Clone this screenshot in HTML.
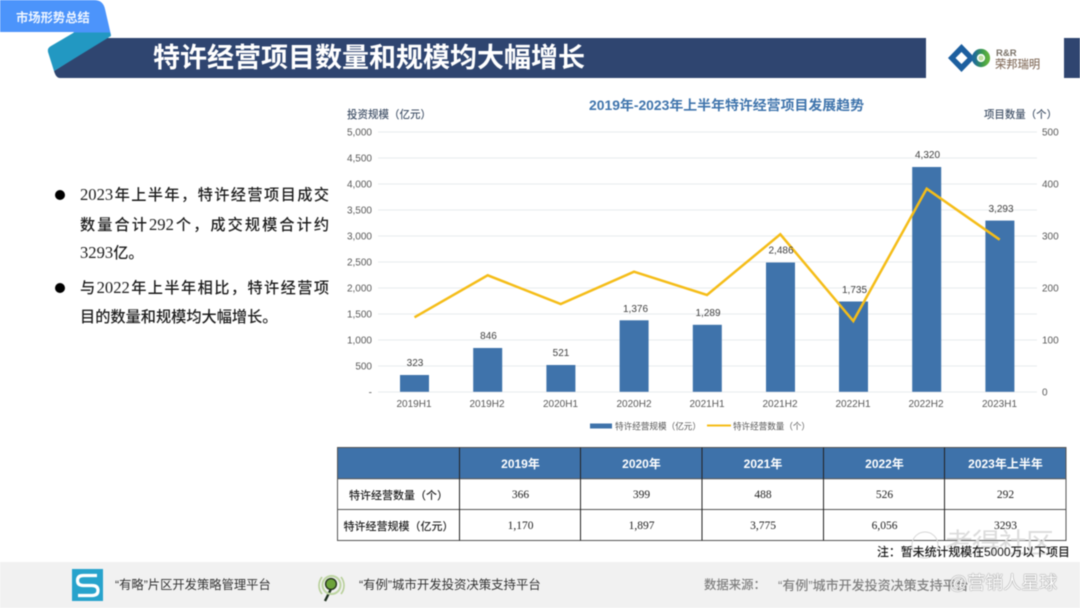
<!DOCTYPE html>
<html lang="zh"><head><meta charset="utf-8"><style>
html,body{margin:0;padding:0;background:#fff}
#p{position:relative;width:1080px;height:608px;overflow:hidden;background:#fff;font-family:"Liberation Sans","Noto Sans CJK SC",sans-serif;filter:blur(.45px)}
.a{position:absolute;white-space:nowrap;line-height:1}
.l{position:absolute;left:80px;width:249px;height:20px;line-height:20px;font-family:"Liberation Sans","Noto Sans CJK SC",sans-serif;font-size:15.2px;font-weight:500;color:#1c1c1c;text-align:justify;text-align-last:justify;white-space:normal}
.l i{font-style:normal;font-family:"Liberation Serif",serif;font-size:16.6px;font-weight:400}
.e{text-align-last:left}
.b{position:absolute;left:55px;width:10px;height:10px;border-radius:50%;background:#000}
svg{position:absolute;left:0;top:0}
svg text{font-family:"Liberation Sans","Noto Sans CJK SC",sans-serif}
.c{position:absolute;display:flex;align-items:center;justify-content:center;font-family:"Liberation Serif","Noto Sans CJK SC",serif;font-size:11.5px;color:#222;white-space:nowrap}
.h{color:#fff;font-weight:700;font-family:"Liberation Sans","Noto Sans CJK SC",sans-serif;font-size:12px}
.n{font-family:"Liberation Sans","Noto Sans CJK SC",sans-serif;font-size:11px;font-weight:500;color:#222}
</style></head><body><div id="p">

<div class="a" style="left:0;top:562px;width:1080px;height:46px;background:#f1f1f1"></div>

<svg width="1080" height="608" viewBox="0 0 1080 608">
  <defs><linearGradient id="g" x1="0" x2="1" y1="0" y2="0"><stop offset="0" stop-color="#1d6a9a"/><stop offset=".6" stop-color="#3c9a4e"/><stop offset="1" stop-color="#5fb13f"/></linearGradient></defs>
  <path d="M106 38H926V78H60Q56 78 54 71Z" fill="#2f4570"/>
  <rect x="1064" y="38" width="16" height="40" fill="#2f4570"/>
  <path d="M0 0H94Q103 0 105 9L111 35H72L74 32H0Z" fill="#4c94fb"/>
  <path d="M74 32.5H110L111 36L54 71L48 52Q47 48 51 46Z" fill="#2298c2"/>

  <!-- logo -->
  <path d="M961.5 44L975 58L961.5 72L948 58Z M961.5 52L955.5 58L961.5 64L967.5 58Z" fill="#1d5f9f" fill-rule="evenodd"/>
  <circle cx="981" cy="58" r="6.6" fill="none" stroke="url(#g)" stroke-width="5"/>
  <circle cx="981" cy="58" r="2.6" fill="#bfe0a0"/>
  <text x="996" y="56" font-size="9.5" font-weight="700" fill="#7a7268">R&amp;R</text>
  <text x="995" y="68" font-size="11.3" font-weight="500" fill="#8a7565">荣邦瑞明</text>

  <!-- chart grid -->
  <g stroke="#eceef0" stroke-width="1.2">
    <path d="M378 132H1037M378 158H1037M378 184H1037M378 210H1037M378 236H1037M378 262H1037M378 288H1037M378 314H1037M378 340H1037M378 366H1037M378 392H1037"/>
  </g>
  <g fill="#3f73ab">
    <rect x="400" y="375" width="29" height="16.8"/>
    <rect x="473.2" y="348" width="29" height="43.8"/>
    <rect x="546.4" y="365" width="29" height="26.8"/>
    <rect x="619.6" y="320.3" width="29" height="71.5"/>
    <rect x="692.8" y="324.8" width="29" height="67"/>
    <rect x="766" y="262.5" width="29" height="129.3"/>
    <rect x="839" y="301.5" width="29" height="90.3"/>
    <rect x="912.2" y="167" width="29" height="224.8"/>
    <rect x="985.4" y="220.6" width="29" height="171.2"/>
  </g>
  <polyline points="414.5,317.3 487.7,275.3 560.7,304 634,271.7 707,295 780.3,234.3 853.3,321 926.7,188.7 999.7,239.7" fill="none" stroke="#f5bd18" stroke-width="2.5" stroke-linejoin="miter"/>

  <g font-size="10" fill="#595959" text-anchor="end">
    <text x="372" y="135.5">5,000</text><text x="372" y="161.5">4,500</text><text x="372" y="187.5">4,000</text><text x="372" y="213.5">3,500</text><text x="372" y="239.5">3,000</text><text x="372" y="265.5">2,500</text><text x="372" y="291.5">2,000</text><text x="372" y="317.5">1,500</text><text x="372" y="343.5">1,000</text><text x="372" y="369.5">500</text><text x="372" y="395.5">-</text>
  </g>
  <g font-size="10" fill="#595959">
    <text x="1042" y="135.5">500</text><text x="1042" y="187.5">400</text><text x="1042" y="239.5">300</text><text x="1042" y="291.5">200</text><text x="1042" y="343.5">100</text><text x="1042" y="395.5">0</text>
  </g>
  <g font-size="10" fill="#595959" text-anchor="middle">
    <text x="414" y="407">2019H1</text><text x="487" y="407">2019H2</text><text x="560.5" y="407">2020H1</text><text x="634" y="407">2020H2</text><text x="707" y="407">2021H1</text><text x="780" y="407">2021H2</text><text x="853" y="407">2022H1</text><text x="926" y="407">2022H2</text><text x="999.5" y="407">2023H1</text>
  </g>
  <g font-size="10" fill="#404040" text-anchor="middle">
    <text x="415" y="366">323</text><text x="488.5" y="339">846</text><text x="561" y="356">521</text><text x="635.5" y="312">1,376</text><text x="708" y="316">1,289</text><text x="781" y="253.5">2,486</text><text x="854.5" y="293">1,735</text><text x="927.5" y="158">4,320</text><text x="1001" y="212">3,293</text>
  </g>
  <text x="589" y="110" font-size="13.4" font-weight="700" fill="#3f74ac" textLength="275" lengthAdjust="spacingAndGlyphs">2019年-2023年上半年特许经营项目发展趋势</text>
  <text x="347" y="118" font-size="11" font-weight="500" fill="#44546a" textLength="84" lengthAdjust="spacingAndGlyphs">投资规模（亿元）</text>
  <text x="984" y="118" font-size="10.6" font-weight="500" fill="#44546a" textLength="73" lengthAdjust="spacingAndGlyphs">项目数量（个）</text>

  <rect x="590" y="423.5" width="22" height="5" fill="#3f73ab"/>
  <text x="615" y="429.5" font-size="9.1" fill="#595959" textLength="86" lengthAdjust="spacingAndGlyphs">特许经营规模（亿元）</text>
  <path d="M707 425.5H731" stroke="#f5bd18" stroke-width="2"/>
  <text x="733" y="429.5" font-size="9.1" fill="#595959" textLength="77" lengthAdjust="spacingAndGlyphs">特许经营数量（个）</text>

  <!-- table -->
  <rect x="337.5" y="447.5" width="729" height="31" fill="#3e72aa"/>
  <g stroke="#555" stroke-width="1" fill="none">
    <rect x="337.5" y="447.5" width="728.5" height="93"/>
    <path d="M337.5 478.7H1066M337.5 509.5H1066"/>
  </g>
  <g stroke="#222" stroke-width="1">
    <path d="M459.5 447.5V540.5M580.5 447.5V540.5M702 447.5V540.5M823.5 447.5V540.5M944.5 447.5V540.5"/>
  </g>

  <!-- footer icons -->
  <rect x="72" y="569" width="31" height="32" fill="#27a3cc"/>
  <path d="M97 575.5H83.5Q77.5 575.5 77.5 580.5Q77.5 585.5 83.5 585.5H92Q98 585.5 98 590.5Q98 595.5 92 595.5H78" fill="none" stroke="#fff" stroke-width="3.2"/>

  <path d="M325 601L331 589" stroke="#1c2e1c" stroke-width="2.4"/>
  <path d="M322 577A13.5 13.5 0 0 0 322 594M341 577A13.5 13.5 0 0 1 341 594" fill="none" stroke="#b7cf98" stroke-width="1.6"/>
  <circle cx="331.5" cy="585" r="9" fill="none" stroke="#bcd4a0" stroke-width="2"/>
  <circle cx="331" cy="584" r="5.4" fill="#6da33a" stroke="#26361d" stroke-width="1.4"/>

  <!-- watermarks -->
  <circle cx="925" cy="545" r="13" fill="none" stroke="#d6d6d6" stroke-width="1"/>
</svg>

<div class="a" style="left:16px;top:11.5px;font-size:12.3px;font-weight:700;color:#eef5ff">市场形势总结</div>
<div class="a" style="left:153px;top:45px;font-size:27px;font-weight:700;color:#fff">特许经营项目数量和规模均大幅增长</div>

<div class="b" style="top:190px"></div>
<div class="l" style="top:185px"><i>2023</i>年上半年，特许经营项目成交</div>
<div class="l" style="top:215px">数量合计<i>292</i>个，成交规模合计约</div>
<div class="l e" style="top:243px"><i>3293</i>亿。</div>
<div class="b" style="top:283px"></div>
<div class="l" style="top:278px">与<i>2022</i>年上半年相比，特许经营项</div>
<div class="l e" style="top:308px">目的数量和规模均大幅增长。</div>

<div class="c h" style="left:460px;top:448px;width:121px;height:31px">2019年</div>
<div class="c h" style="left:581px;top:448px;width:121px;height:31px">2020年</div>
<div class="c h" style="left:702px;top:448px;width:122px;height:31px">2021年</div>
<div class="c h" style="left:824px;top:448px;width:121px;height:31px">2022年</div>
<div class="c h" style="left:945px;top:448px;width:121px;height:31px">2023年上半年</div>

<div class="c n" style="left:338px;top:479px;width:121px;height:31px">特许经营数量（个）</div>
<div class="c" style="left:460px;top:479px;width:121px;height:31px">366</div>
<div class="c" style="left:581px;top:479px;width:121px;height:31px">399</div>
<div class="c" style="left:702px;top:479px;width:122px;height:31px">488</div>
<div class="c" style="left:824px;top:479px;width:121px;height:31px">526</div>
<div class="c" style="left:945px;top:479px;width:121px;height:31px">292</div>

<div class="c n" style="left:338px;top:510px;width:121px;height:31px">特许经营规模（亿元）</div>
<div class="c" style="left:460px;top:510px;width:121px;height:31px">1,170</div>
<div class="c" style="left:581px;top:510px;width:121px;height:31px">1,897</div>
<div class="c" style="left:702px;top:510px;width:122px;height:31px">3,775</div>
<div class="c" style="left:824px;top:510px;width:121px;height:31px">6,056</div>
<div class="c" style="left:945px;top:510px;width:121px;height:31px">3293</div>

<div class="a" style="left:945px;top:530px;font-size:28px;letter-spacing:-1px;color:#dcdcdc">考得社区</div>
<div class="a" style="left:877px;top:547px;font-size:11.9px;font-weight:500;color:#1a1a1a">注：暂未统计规模在5000万以下项目</div>

<div class="a" style="left:115px;top:579px;font-size:12.3px;color:#333">“有略”片区开发策略管理平台</div>
<div class="a" style="left:359px;top:579px;font-size:12.4px;color:#333">“有例”城市开发投资决策支持平台</div>
<div class="a" style="left:704px;top:579px;font-size:12.4px;font-weight:500;color:#808080">数据来源：</div>
<div class="a" style="left:778px;top:578.5px;font-size:13px;font-weight:500;color:#808080">“有例”城市开发投资决策支持平台</div>
<div class="a" style="left:949px;top:574px;font-size:18px;color:#fff;text-shadow:0 0 1px #777,0 0 1px #777">@营销人星球</div>

</div></body></html>
